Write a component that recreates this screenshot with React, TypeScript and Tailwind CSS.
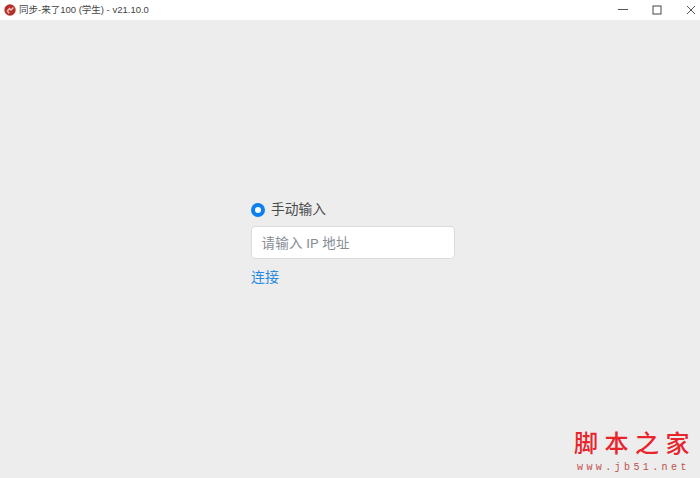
const cjk = "font-['Roboto','Noto_Sans_CJK_SC',sans-serif]";

function Logo() {
  return (
    <svg width="12" height="12" viewBox="0 0 12 12" className="mr-[3px] shrink-0">
      <circle cx="6" cy="6" r="5.7" fill="#b5302a" />
      <path d="M3 7.5 L5.5 4.5 L7 6 L9.5 3.5" stroke="#f0c8be" strokeWidth="1.4" fill="none" />
      <circle cx="4.5" cy="8.5" r="1" fill="#f0c8be" />
    </svg>
  );
}

export default function App() {
  return (
    <div className={`w-[700px] h-[478px] relative overflow-hidden flex flex-col bg-[#ededed] ${cjk}`}>
      <header className="h-[20px] bg-white flex items-center shrink-0 pl-[4px]">
        <Logo />
        <span className="text-[9.5px] leading-none text-[#444444] font-['Liberation_Sans','Noto_Sans_CJK_SC',sans-serif]">同步-来了100 (学生) - v21.10.0</span>
        <div className="ml-auto flex items-center h-full gap-[24px] pr-[4px]">
          <svg width="10" height="10" viewBox="0 0 10 10"><path d="M0 4.5H10" stroke="#555" strokeWidth="1" /></svg>
          <svg width="10" height="10" viewBox="0 0 10 10"><rect x="1" y="1" width="8" height="8" fill="none" stroke="#444" strokeWidth="1" /></svg>
          <svg width="10" height="10" viewBox="0 0 10 10"><path d="M1 1L9 9M9 1L1 9" stroke="#555" strokeWidth="1" /></svg>
        </div>
      </header>
      <main className="flex-1 flex flex-col pl-[251px] pt-[179px]">
        <label className="flex items-center h-[22px] gap-[6px]">
          <span className="w-[14px] h-[14px] rounded-full bg-[#0d7ff0] flex items-center justify-center">
            <span className="w-[6px] h-[6px] rounded-full bg-white" />
          </span>
          <span className="text-[13.75px] leading-none text-[#4a4a4a]">手动输入</span>
        </label>
        <div className="mt-[5px] w-[204px] h-[33px] bg-white rounded-[4px] border border-[#dcdcdc] flex items-center pl-[9.5px] pt-[3px]">
          <span className="text-[13.5px] leading-none text-[#868e96] tracking-[0.2px]">请输入 IP 地址</span>
        </div>
        <span className="mt-[9px] text-[14px] leading-[18px] text-[#2a8ae0]">连接</span>
      </main>
      <div className="absolute left-[574px] top-[431px] flex flex-col items-start w-[126px]">
        <span className="text-[24px] leading-[27px] font-medium text-[#e8242c] tracking-[6.5px] whitespace-nowrap">脚本之家</span>
        <span className="ml-[3px] mt-[4px] text-[10px] leading-[12px] text-[#c0504d] tracking-[3.4px] whitespace-nowrap font-['Liberation_Mono',monospace]">www.jb51.net</span>
      </div>
    </div>
  );
}
